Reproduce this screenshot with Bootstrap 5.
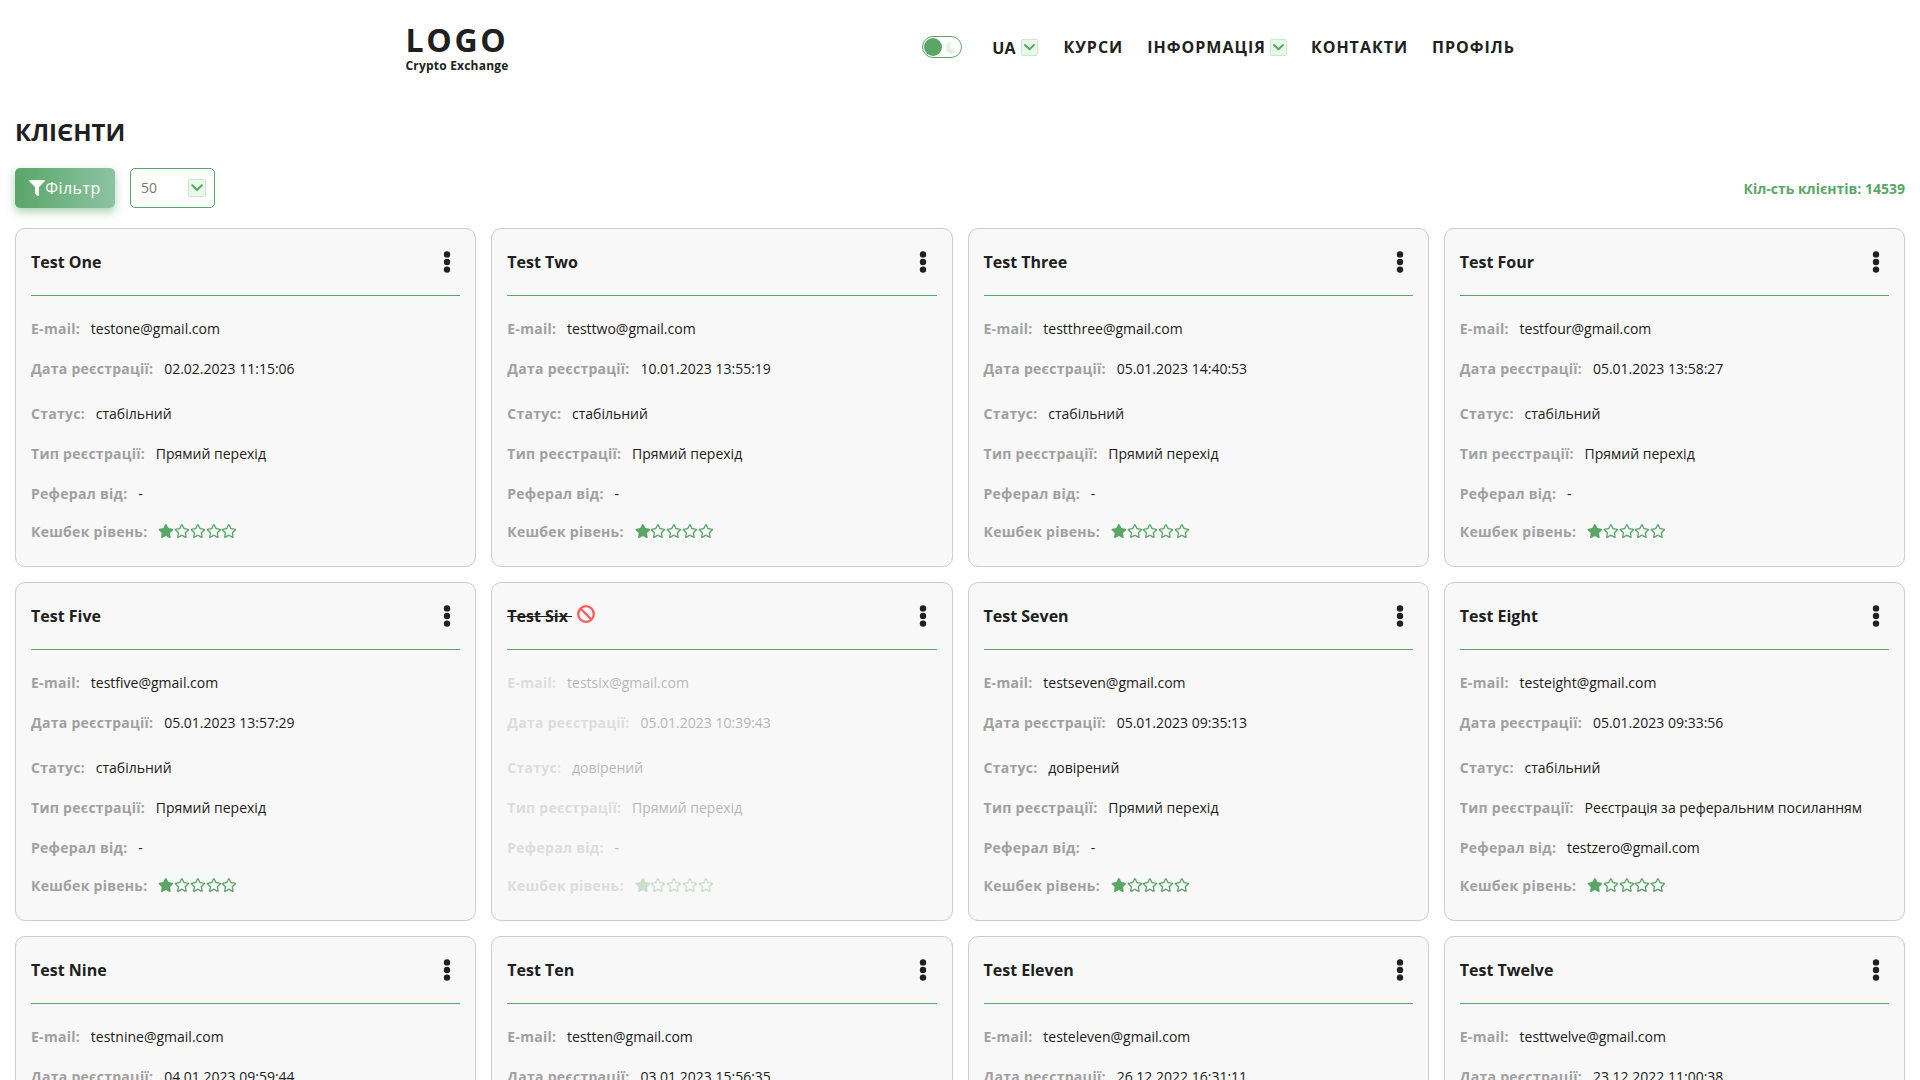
<!DOCTYPE html>
<html lang="uk">
<head>
<meta charset="utf-8">
<meta name="viewport" content="width=device-width, initial-scale=1">
<title>Клієнти</title>
<link href="https://cdn.jsdelivr.net/npm/bootstrap@5.3.0/dist/css/bootstrap.min.css" rel="stylesheet">
<style>
:root { --green: #5aa667; --ink: #202020; }
body { font-family: "Open Sans", sans-serif; color: var(--ink); background: #fff; overflow: hidden; height: 1080px; font-size: 14px; line-height: 20px; }
svg { display: block; flex: none; }
.site-head { height: 94px; padding-left: 405.5px; padding-right: 405px; }
.brand-name { font-size: 32px; font-weight: 700; letter-spacing: 2.7px; line-height: 36px; padding-top: 1px; }
.brand-sub { font-size: 12px; font-weight: 700; line-height: 15px; letter-spacing: .2px; }
.main-nav { font-size: 16px; font-weight: 700; letter-spacing: 1px; line-height: 24px; gap: 24px; }
.main-nav a { color: inherit; text-decoration: none; }
.theme-switch { width: 40px; height: 22px; border: 1px solid var(--green); border-radius: 11px; padding: 0 3px 0 1px; margin-right: 6px; }
.knob { width: 18px; height: 18px; border-radius: 50%; background: var(--green); }
.lang { letter-spacing: 0; gap: 6px; margin-right: 1px; }
.lang > span:first-child { padding-top: 2px; }
.info .chev { margin-top: 1px; }
.chev { width: 17px; height: 17px; border: 1px solid #cde5d1; border-radius: 2px; background: #e8fbe9; flex: none; }
.content { padding: 0 15px; }
.page-title { font-size: 24px; font-weight: 700; line-height: 32px; padding: 22px 0 0; margin: 0 0 20px; }
.toolbar { margin-bottom: 20px; gap: 15px; }
.filter-btn { width: 100px; height: 40px; border: 0; border-radius: 5px; color: #fff; font-size: 16px; letter-spacing: .5px; background: linear-gradient(90deg, #5aa667, #8dc3a4); box-shadow: 0 4px 10px rgba(90,166,103,.5); }
.size-select { width: 85px; height: 40px; border: 1px solid var(--green); border-radius: 5px; padding: 0 8px 0 10px; color: #777; }
.size-select .chev { width: 18px; height: 18px; }
.total { color: var(--green); font-weight: 700; padding-top: 1px; }
.client-grid { display: grid; grid-template-columns: repeat(4, minmax(0, 1fr)); gap: 15px; }
.client { height: 339px; border: 1px solid #ccc; border-radius: 10px; background: #f8f8f8; padding: 15px; }
.client-head { height: 52px; border-bottom: 1px solid var(--green); margin-bottom: 23px; padding-right: 9.2px; }
.client-name { font-size: 16px; font-weight: 700; line-height: 22px; margin-top: -16px; }
.ban-box { margin: -4px 0 0 5px; }
.dots { margin-top: -16px; }
.field { height: 40px; gap: 10.8px; }
.field b { font-weight: 700; color: #a0a0a0; letter-spacing: .28px; }
.field-date { height: 45px; }
.field-ref { height: 38px; }
.star-row { padding-top: 2px; }
.blocked .client-fields { opacity: .3; }
</style>
</head>
<body>
<svg width="0" height="0" class="position-absolute" aria-hidden="true">
  <symbol id="down" viewBox="0 0 15 15"><path d="M3 5l4.5 4.3L12 5" fill="none" stroke="#5aa667" stroke-width="2" stroke-linecap="round" stroke-linejoin="round"/></symbol>
  <symbol id="dots" viewBox="0 0 8 22"><g fill="#202020"><circle cx="4" cy="3.4" r="3.2"/><circle cx="4" cy="11" r="3.2"/><circle cx="4" cy="18.6" r="3.2"/></g></symbol>
  <symbol id="star" viewBox="0 0 576 512"><path fill="#5aa667" d="M259.3 17.8L194 150.2 47.9 171.5c-26.2 3.8-36.7 36.1-17.7 54.6l105.700 103-25 145.5c-4.500 26.3 23.200 46 46.400 33.700L288 439.600l130.700 68.700c23.200 12.200 50.900-7.400 46.400-33.700l-25-145.500 105.700-103c19-18.500 8.500-50.800-17.700-54.600L382 150.200 316.700 17.800c-11.700-23.600-45.600-23.900-57.400 0z"/></symbol>
  <symbol id="star-o" viewBox="0 0 576 512"><path fill="#5aa667" d="M528.1 171.5L382 150.2 316.700 17.800c-11.700-23.600-45.600-23.900-57.400 0L194 150.200 47.900 171.500c-26.200 3.800-36.700 36.100-17.700 54.600l105.700 103-25 145.500c-4.500 26.300 23.200 46 46.400 33.700L288 439.600l130.700 68.700c23.200 12.200 50.900-7.400 46.400-33.700l-25-145.500 105.700-103c19-18.500 8.500-50.800-17.700-54.600zM388.600 312.300l23.700 138.400L288 385.400l-124.300 65.300 23.700-138.400-100.600-98 139-20.200 62.200-126 62.200 126 139 20.200-100.600 98z"/></symbol>
</svg>

<header class="site-head d-flex align-items-center justify-content-between">
  <div class="brand-box">
    <div class="brand-name">LOGO</div>
    <div class="brand-sub">Crypto Exchange</div>
  </div>
  <nav class="main-nav d-flex align-items-center">
    <div class="theme-switch d-flex align-items-center justify-content-between">
      <span class="knob"></span>
      <svg width="13" height="13" viewBox="0 0 13 13"><path d="M6.200 .8a6 6 0 1 0 6 8.200A5.300 5.300 0 0 1 6.200 .8z" fill="#e4f1e7"/></svg>
    </div>
    <a href="#" class="lang d-flex align-items-center"><span>UA</span><span class="chev"><svg width="15" height="15"><use href="#down"/></svg></span></a>
    <a href="#">КУРСИ</a>
    <a href="#" class="info d-flex align-items-center gap-1"><span>ІНФОРМАЦІЯ</span><span class="chev"><svg width="15" height="15"><use href="#down"/></svg></span></a>
    <a href="#">КОНТАКТИ</a>
    <a href="#">ПРОФІЛЬ</a>
  </nav>
</header>

<main class="content">
  <h1 class="page-title">КЛІЄНТИ</h1>
  <div class="toolbar d-flex align-items-center">
    <button class="filter-btn d-flex align-items-center justify-content-center p-0"><svg width="16" height="16" viewBox="0 0 512 512"><path fill="#fff" d="M488 0H24C2.700 0-8 25.900 7 41l185 185v206c0 8 4 15 10 20l80 56c16 11 38 0 38-20V226L505 41c15-15 4-41-17-41z"/></svg><span>Фільтр</span></button>
    <div class="size-select d-flex align-items-center justify-content-between"><span>50</span><span class="chev"><svg width="16" height="16"><use href="#down"/></svg></span></div>
    <div class="total ms-auto">Кіл-сть клієнтів: 14539</div>
  </div>
  <section class="client-grid" id="clients"></section>
</main>

<script src="https://cdn.jsdelivr.net/npm/bootstrap@5.3.0/dist/js/bootstrap.bundle.min.js"></script>
<script>
const direct = 'Прямий перехід';
const clients = [
  ['Test One', 'testone', '02.02.2023 11:15:06', 'стабільний'],
  ['Test Two', 'testtwo', '10.01.2023 13:55:19', 'стабільний'],
  ['Test Three', 'testthree', '05.01.2023 14:40:53', 'стабільний'],
  ['Test Four', 'testfour', '05.01.2023 13:58:27', 'стабільний'],
  ['Test Five', 'testfive', '05.01.2023 13:57:29', 'стабільний'],
  ['Test Six', 'testsix', '05.01.2023 10:39:43', 'довірений', direct, '-', true],
  ['Test Seven', 'testseven', '05.01.2023 09:35:13', 'довірений'],
  ['Test Eight', 'testeight', '05.01.2023 09:33:56', 'стабільний', 'Реєстрація за реферальним посиланням', 'testzero@gmail.com'],
  ['Test Nine', 'testnine', '04.01.2023 09:59:44', 'стабільний'],
  ['Test Ten', 'testten', '03.01.2023 15:56:35', 'стабільний'],
  ['Test Eleven', 'testeleven', '26.12.2022 16:31:11', 'стабільний'],
  ['Test Twelve', 'testtwelve', '23.12.2022 11:00:38', 'стабільний']
];
const star = id => `<svg width="15.75" height="14" viewBox="0 0 576 512"><use href="#${id}"/></svg>`;
const stars = star('star') + star('star-o').repeat(4);
const ban = '<svg width="18" height="18" viewBox="0 0 18 18"><g fill="none" stroke="#ff5a5a" stroke-width="2.3"><circle cx="9" cy="9" r="7.8"/><path d="M3.5 3.5l11 11"/></g></svg>';
const field = (cls, label, value) => `<div class="field ${cls} d-flex"><b>${label}:</b><span>${value}</span></div>`;
document.getElementById('clients').innerHTML = clients.map(([name, mail, date, status, type = direct, ref = '-', blocked]) => `
  <article class="client ${blocked ? 'blocked' : ''}">
    <div class="client-head d-flex align-items-center justify-content-between">
      <div class="client-name d-flex align-items-center">${blocked ? `<s>${name}&nbsp;</s><span class="ban-box">${ban}</span>` : name}</div>
      <svg class="dots" width="8" height="22"><use href="#dots"/></svg>
    </div>
    <div class="client-fields">
      ${field('', 'E-mail', mail + '@gmail.com')}
      ${field('field-date', 'Дата реєстрації', date)}
      ${field('', 'Статус', status)}
      ${field('', 'Тип реєстрації', type)}
      ${field('field-ref', 'Реферал від', ref)}
      <div class="field d-flex"><b>Кешбек рівень:</b><span class="d-flex star-row">${stars}</span></div>
    </div>
  </article>`).join('');
</script>
</body>
</html>
